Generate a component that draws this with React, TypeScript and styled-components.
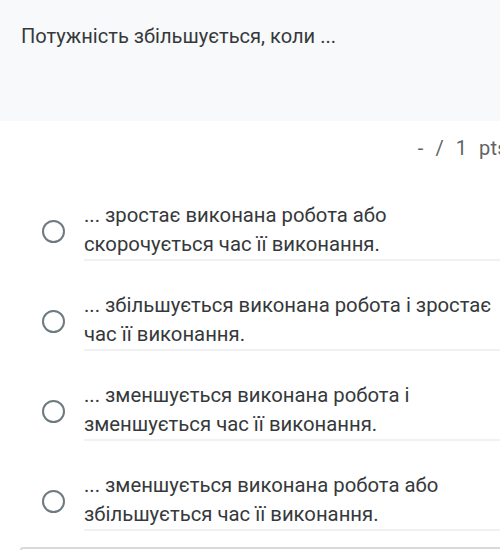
import React from "react";
import styled, { createGlobalStyle } from "styled-components";

const Global = createGlobalStyle`
  html, body { margin: 0; padding: 0; background: #ffffff; }
  body { font-family: Roboto, "Noto Sans", Arial, sans-serif; }
`;

const Page = styled.div`
  width: 500px;
  height: 550px;
  overflow: hidden;
  background: #fff;
`;

const Header = styled.div`
  height: 121px;
  box-sizing: border-box;
  background: #f8f9fb;
  padding: 24px 21px 0;
`;

const Question = styled.div`
  font-size: 20.1px;
  color: #36393b;
  line-height: 24px;
`;

const Points = styled.div`
  display: flex;
  justify-content: flex-end;
  margin-right: -8px;
  padding-top: 15px;
  font-size: 20px;
  line-height: 24px;
  color: #5f6466;
  word-spacing: 6.5px;
  letter-spacing: 0.3px;
  white-space: nowrap;
`;

const Options = styled.div`
  display: flex;
  flex-direction: column;
  gap: 30px;
  padding-top: 41px;
`;

const Option = styled.label`
  display: flex;
  align-items: center;
  padding-left: 42px;
`;

const Radio = styled.span`
  flex: none;
  width: 19px;
  height: 19px;
  border-radius: 50%;
  border: 2.5px solid #6d7a7f;
  margin-right: 19px;
`;

const OptionText = styled.div`
  flex: 1;
  border-bottom: 2px solid #f0f1f2;
  font-size: 20.3px;
  line-height: 29px;
  color: #36393b;
  padding-right: 4px;
`;

const Footer = styled.div`
  margin: 16px 0 0 20px;
  height: 20px;
  border-top: 2px solid #d9d9d9;
  border-left: 2px solid #d9d9d9;
  border-top-left-radius: 3px;
`;

const options = [
  "... зростає виконана робота або скорочується час її виконання.",
  "... збільшується виконана робота і зростає час її виконання.",
  "... зменшується виконана робота і зменшується час її виконання.",
  "... зменшується виконана робота або збільшується час її виконання.",
];

export default function App() {
  return (
    <Page>
      <Global />
      <Header>
        <Question>Потужність збільшується, коли ...</Question>
      </Header>
      <Points>- / 1 pts</Points>
      <Options>
        {options.map((o) => (
          <Option key={o}>
            <Radio />
            <OptionText>{o}</OptionText>
          </Option>
        ))}
      </Options>
      <Footer />
    </Page>
  );
}
